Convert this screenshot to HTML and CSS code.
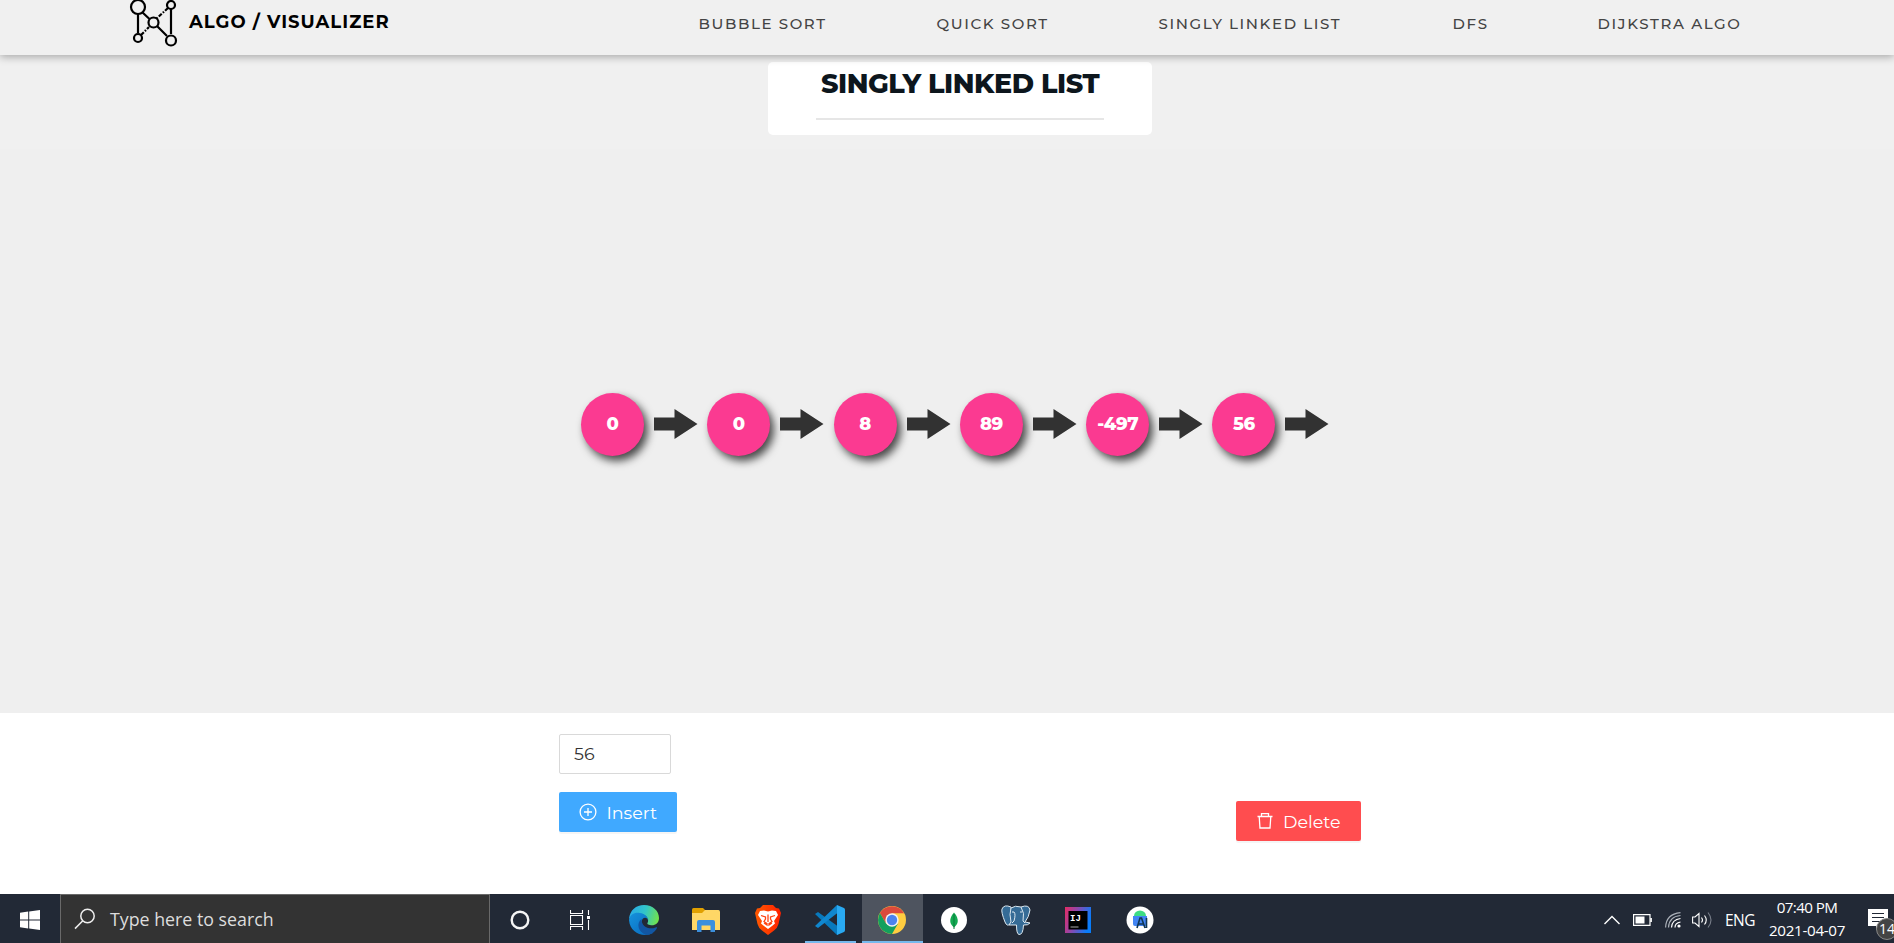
FILE: index.html
```html
<!DOCTYPE html>
<html lang="en">
<head>
<meta charset="utf-8">
<title>Algo / Visualizer</title>
<link rel="stylesheet" href="styles.css">
</head>
<body>
<header class="navbar">
  <a class="brand">
    <svg class="brand-icon" width="50" height="48" viewBox="0 0 50 48" fill="none" stroke="#000" stroke-width="2.200">
      <path d="M10 14V33M14 12l7.500 7M43 8V34M29 26l10 10"/>
      <path d="M13 35l8-8M40 8L28 19" stroke-dasharray="4 1.500 1.500 1.500"/>
      <circle cx="10" cy="7" r="7"/><circle cx="43" cy="5" r="4"/><circle cx="25.500" cy="22.500" r="5"/>
      <circle cx="10" cy="38" r="4"/><circle cx="43" cy="40.500" r="5"/>
    </svg>
    <span class="brand-name">ALGO / VISUALIZER</span>
  </a>
  <nav class="links">
    <a class="l1">BUBBLE SORT</a><a class="l2">QUICK SORT</a><a class="l3">SINGLY LINKED LIST</a><a class="l4">DFS</a><a class="l5">DIJKSTRA ALGO</a>
  </nav>
</header>
<main>
  <section class="heading">
    <div class="title-card"><h1>SINGLY LINKED LIST</h1><hr></div>
  </section>
  <section class="stage">
    <div class="list">
      <div class="node">0</div><svg class="arrow" viewBox="0 0 44 30"><path d="M0 8.500H20.500V0L43.500 15 20.500 30V21.500H0Z"/></svg>
      <div class="node">0</div><svg class="arrow" viewBox="0 0 44 30"><path d="M0 8.500H20.500V0L43.500 15 20.500 30V21.500H0Z"/></svg>
      <div class="node">8</div><svg class="arrow" viewBox="0 0 44 30"><path d="M0 8.500H20.500V0L43.500 15 20.500 30V21.500H0Z"/></svg>
      <div class="node">89</div><svg class="arrow" viewBox="0 0 44 30"><path d="M0 8.500H20.500V0L43.500 15 20.500 30V21.500H0Z"/></svg>
      <div class="node">-497</div><svg class="arrow" viewBox="0 0 44 30"><path d="M0 8.500H20.500V0L43.500 15 20.500 30V21.500H0Z"/></svg>
      <div class="node">56</div><svg class="arrow" viewBox="0 0 44 30"><path d="M0 8.500H20.500V0L43.500 15 20.500 30V21.500H0Z"/></svg>
    </div>
  </section>
  <section class="controls">
    <div class="insert-group">
      <div class="field">56</div>
      <button class="btn insert">
        <svg width="18" height="18" viewBox="0 0 18 18" fill="none" stroke="#fff" stroke-width="1.300"><circle cx="9" cy="9" r="7.900"/><path d="M9 5v8M5 9h8"/></svg>
        <span>Insert</span>
      </button>
    </div>
    <button class="btn delete">
      <svg width="16" height="18" viewBox="0 0 16 18" fill="none" stroke="#fff" stroke-width="1.300"><path d="M.5 4.500H15.500M2.200 4.500L3 16H13L13.800 4.500M4.500 4.500V1.700H11.500V4.500"/></svg>
      <span>Delete</span>
    </button>
  </section>
</main>
<footer class="taskbar">
  <div class="start"><svg width="20" height="20" viewBox="0 0 20 20" fill="#fff"><path d="M0 2.800L8.200 1.600V9.400H0ZM9.200 1.500L20 0V9.400H9.200ZM0 10.400H8.200V18.500L0 17.300ZM9.200 10.400H20V20L9.200 18.600Z"/></svg></div>
  <div class="search">
    <svg width="22" height="22" viewBox="0 0 22 22" fill="none" stroke="#eee" stroke-width="1.500"><circle cx="13.500" cy="8" r="6.700"/><path d="M8.800 12.800L1 20.600"/></svg>
    <span>Type here to search</span>
  </div>
  <div class="apps">
    <div class="app cortana"><svg width="20" height="20" viewBox="0 0 20 20"><circle cx="10" cy="10" r="8.300" fill="none" stroke="#f5f5f5" stroke-width="2.400"/></svg></div>
    <div class="app view"><svg width="20" height="20" viewBox="0 0 20 20" fill="none" stroke="#fff" stroke-width="1.100"><path d="M.5 0V3.500H12.500V0M.5 5.500H12.500V14.500H.5ZM.5 20V16.500H12.500V20M18.500 0V5M18.500 10V20"/><path d="M17 6h3v3h-3z" fill="#fff" stroke="none"/></svg></div>
    <div class="app"><svg width="30" height="30" viewBox="0 0 30 30">
      <defs><linearGradient id="e1" x1="0" y1=".4" x2="1" y2=".6"><stop stop-color="#28a9e8"/><stop offset=".5" stop-color="#32c5c9"/><stop offset="1" stop-color="#72e34b"/></linearGradient>
      <linearGradient id="e2" x1="0" y1="0" x2="1" y2="1"><stop stop-color="#1692dc"/><stop offset="1" stop-color="#0868bd"/></linearGradient></defs>
      <path d="M0 14C1 5 7 0 15 0C24 0 30 6 30 13C30 19 25 21 21 20C18 19.500 18 18.500 19 17C20 12 14 7 7 10C3 11 1 13 0 14Z" fill="url(#e1)"/>
      <path d="M0 15C1 9 6 7 11 8C16 8.500 19 12 19.500 16C18 11 13 12 12.500 17C12 24 19 27 24 28C14 33 1 28 0 15Z" fill="url(#e2)"/>
      <path d="M12.500 14C7 18 9 27 17 30C22 30 26 27 28 23C28.500 22 27.500 22 26.500 22.500C20 25 12.500 22 12.500 14Z" fill="#1256a3"/></svg></div>
    <div class="app"><svg width="28" height="24" viewBox="0 0 28 24"><path d="M0 1.500Q0 0 1.500 0H11L13.500 2.500V6H0Z" fill="#e1a000"/><path d="M0 5H10L13 2H26.500Q28 2 28 4V22H0Z" fill="#ffd766"/><path d="M5 24V14Q5 12 7 12H21Q23 12 23 14V24H18.500V17.500H9.500V24Z" fill="#3b8fdd"/></svg></div>
    <div class="app"><svg width="26" height="30" viewBox="0 0 26 30"><defs><linearGradient id="b"><stop stop-color="#ff5a00"/><stop offset="1" stop-color="#ff2000"/></linearGradient></defs><path d="M8 0H18L21 3L24 3.500L26 8L23.500 19Q22.500 23 19 25.500L13 30L7 25.500Q3.500 23 2.500 19L0 8L2 3.500L5 3Z" fill="url(#b)"/><path d="M5 6L9 5.500 13 6.500 17 5.500 21 6 23 10 19 16 20 18.500 17 21 13 24 9 21 6 18.500 7 16 3 10Z" fill="#fff"/><path d="M6 10.500L10.500 12V14L9 16.500 12 18.500V20L9 18M20 10.500L15.500 12V14L17 16.500 14 18.500V20L17 18M13 9.500V17" stroke="#ff4312" stroke-width="1.300" fill="none"/></svg></div>
    <div class="app code"><svg width="30" height="30" viewBox="0 0 30 30"><path d="M0 9L3 7L28 25L22 30Z" fill="#0879bd"/><path d="M0 21L3 23L25 6L22 0Z" fill="#1087cf"/><path d="M22 0L29 3Q30 3.500 30 5V25Q30 26.500 29 27L22 30Z" fill="#29a9f2"/></svg></div>
    <div class="app active"><svg width="28" height="28" viewBox="0 0 28 28"><circle cx="14" cy="14" r="14" fill="#ffcd40"/><path d="M1.900 7A14 14 0 0 1 26.100 7.200H14L8 17.500Z" fill="#db4a3c"/><path d="M1.900 7A14 14 0 0 0 14 28L20 17.500L14 20L8 17.500Z" fill="#13a05e"/><circle cx="14" cy="14" r="6.700" fill="#f2f2f2"/><circle cx="14" cy="14" r="5.200" fill="#4b83ee"/></svg></div>
    <div class="app"><svg width="26" height="26" viewBox="0 0 26 26"><circle cx="13" cy="13" r="13" fill="#fff"/><path d="M13 5.500C7.500 12 8.500 17 13 20.500C17.500 17 18.500 12 13 5.500Z" fill="#13aa52"/><path d="M13 7V22" stroke="#087a3b" stroke-width="1"/></svg></div>
    <div class="app"><svg width="30" height="30" viewBox="0 0 30 30" fill="#356b96" stroke="#dce8f0" stroke-width="1"><path d="M10 2Q3-1 1 4Q0 7 4 17Q6 22 9 19L11 16Z"/><path d="M20 2Q28-1 29 5Q28 12 24 17L29 18Q27 20.500 22.500 20Q22 30 18 29.500Q15.500 29 15.500 20L12 20L8 20L10 17Q8 9 10 3Q14 0 20 2Z"/><path d="M20 2Q24 8 22 16L24 18M13 7Q15 9 13 16L11 18M13 7H11M19 7H21" fill="none"/></svg></div>
    <div class="app"><svg width="26" height="26" viewBox="0 0 26 26"><defs><linearGradient id="j" x1="0" y1=".1" x2="1" y2=".4"><stop stop-color="#e22d68"/><stop offset=".45" stop-color="#8a49b0"/><stop offset="1" stop-color="#087cfa"/></linearGradient></defs><path d="M0 0H26V26H0Z" fill="url(#j)"/><path d="M3.500 4H22.500V22.500H3.500Z"/><path d="M5.500 20h8" stroke="#aaa"/><text x="5" y="13.500" class="ij">IJ</text></svg></div>
    <div class="app"><svg width="28" height="28" viewBox="0 0 28 28"><circle cx="14" cy="14" r="13.500" fill="#fff"/><path d="M8 10a6 5.500 0 0 1 12 0Z" fill="#3ddc84"/><path d="M7 10H21V20H9Q7 20 7 18Z" fill="#4285f4"/><path d="M11 22L14 12H15.500L19 22M12.500 18H17M20.500 12V22" stroke="#103655" stroke-width="1.600" fill="none"/></svg></div>
  </div>
  <div class="tray">
    <svg class="chevron" width="16" height="10" viewBox="0 0 16 10"><path d="M.5 9L8 1.500L15.500 9" fill="none" stroke="#fff" stroke-width="1.400"/></svg>
    <svg class="battery" width="19" height="12" viewBox="0 0 19 12"><path d="M.6.600H17V11.400H.6ZM18.300 4V8" fill="none" stroke="#fff" stroke-width="1.200"/><path d="M2.500 2.500H11.500V9.500H2.500Z" fill="#fff"/></svg>
    <svg class="wifi" width="16" height="16" viewBox="0 0 16 16" fill="none" stroke="#fff" stroke-width="1.200"><path d="M10 15.500Q10 11 15.500 10"/><path d="M6.500 15.500Q7 7.500 15.500 6.500"/><path d="M3.500 15.500Q4 4.500 15.500 3.500M.6 15.500Q1 2 15.500.6" stroke="#aab0b8"/><circle cx="14" cy="14" r="1.600" fill="#fff" stroke="none"/></svg>
    <svg class="sound" width="20" height="18" viewBox="0 0 20 18" fill="none" stroke="#fff" stroke-width="1.100"><path d="M.6 6H3L7 2.500V15.500L3 12H.6ZM9.500 6.500Q11.500 9 9.500 11.500M12.500 4.500Q16 9 12.500 13.500"/><path d="M16 1.500Q22 9 16 16.500" stroke="#777d88"/></svg>
    <span class="lang">ENG</span>
    <div class="clock"><span class="time">07:40 PM</span><span class="date">2021-04-07</span></div>
    <div class="notice"><svg width="20" height="21" viewBox="0 0 20 21"><path d="M0 0H20V17H12L8 21V17H0Z" fill="#fff"/><path d="M4 4.500H16M4 8.500H16M4 12.500H12" stroke="#202735" stroke-width="1.100"/></svg><span class="badge">14</span></div>
  </div>
</footer>
</body>
</html>
```
FILE: styles.css
```css
* { box-sizing: border-box; }
body { margin: 0; width: 1894px; height: 943px; overflow: hidden; display: flex; flex-direction: column; background: #fff; font-family: Montserrat, Inter, sans-serif; }
svg { display: block; flex: none; }
.navbar { height: 55px; flex: none; display: flex; background: #f0f0f0; box-shadow: 0 2px 8px rgba(0,0,0,.3); position: relative; padding-left: 128px; }
.brand { display: flex; flex: none; width: 570px; }
.brand-name { margin-left: 11px; line-height: 44px; font-size: 18px; font-weight: 700; color: #000; letter-spacing: 1.030px; white-space: nowrap; }
.links { display: flex; color: #444; font-size: 15px; font-weight: 500; line-height: 48px; white-space: nowrap; letter-spacing: 1.600px; padding-left: .6px; }
.links a { flex: none; }
.l1 { width: 238px; }
.l2 { width: 222px; }
.l3 { width: 294px; }
.l4 { width: 145px; }
main { flex: 1; display: flex; flex-direction: column; }
.heading { height: 94px; background: #f0f0f0; display: flex; padding: 7px 0 0 768px; }
.title-card { width: 384px; height: 73px; flex: none; background: #fff; border-radius: 5px; padding: 7px 48px 0; }
h1 { margin: 0; font-size: 27px; line-height: 30px; font-weight: 800; letter-spacing: -.45px; color: #0d161d; white-space: nowrap; text-align: center; }
hr { border: 0; height: 2px; margin: 19px 0 0; background: #e6e6e6; }
.stage { height: 564px; background: #efefef; padding: 244px 0 0 581px; }
.list { display: flex; align-items: center; height: 62px; }
.node { width: 63px; height: 63px; flex: none; border-radius: 50%; background: #fb3a91; box-shadow: 4px 5px 9px rgba(0,0,0,.7); color: #fff; font-size: 18px; font-weight: 800; letter-spacing: -.4px; display: flex; align-items: center; justify-content: center; }
.arrow { width: 44px; height: 30px; margin: 0 9.300px 0 10px; fill: #323232; }
.controls { display: flex; justify-content: space-between; padding: 21px 533px 0 559px; }
.field { width: 112px; height: 40px; border: 1px solid #d9d9d9; border-radius: 2px; padding-left: 14px; font-size: 17.500px; line-height: 37px; color: #333; }
.btn { height: 40px; border: 0; border-radius: 2px; color: #fff; font-family: Montserrat, Inter, sans-serif; font-size: 17.500px; display: flex; align-items: center; }
.btn span { padding-top: 1px; }
.insert { width: 118px; margin-top: 18px; padding: 0 0 0 19.500px; background: #40a9ff; gap: 10px; box-shadow: 0 2px 0 rgba(0,0,0,.04); }
.delete { width: 125px; margin-top: 67px; padding: 0 0 0 21px; gap: 10px; background: #ff4d4f; box-shadow: 0 2px 0 rgba(0,0,0,.04); }
.taskbar { height: 49px; flex: none; display: flex; background: #222936; color: #fff; font-family: "Segoe UI", "Open Sans", "Noto Sans", sans-serif; }
.start { width: 60px; flex: none; display: flex; align-items: center; justify-content: center; padding-top: 2px; }
.search { width: 430px; flex: none; background: #333; border: 1px solid #696969; border-bottom: 0; display: flex; align-items: center; padding-left: 13px; gap: 14px; font-size: 17.800px; color: #ddd; white-space: nowrap; }
.apps { display: flex; flex: none; }
.app { width: 62px; height: 49px; flex: none; display: flex; align-items: center; justify-content: center; padding-top: 2px; }
.cortana { width: 60px; }
.view { width: 63px; padding-right: 3px; }
.code { width: 61px; background: linear-gradient(#76b9ed,#76b9ed) 5px 100% / 51px 2px no-repeat; padding-right: 1px; }
.code { margin-left: 1px; }
.active { width: 61px; margin-left: 1px; background: #4e545f; border-bottom: 2px solid #76b9ed; padding: 4px 2px 0 0; }
.ij { font: bold 9px "Liberation Mono", monospace; fill: #fff; }
.tray { flex: 1; min-width: 0; display: flex; align-items: center; padding: 2px 0 0 433px; white-space: nowrap; }
.battery { margin-left: 13px; }
.wifi { margin-left: 13px; }
.sound { margin-left: 11px; }
.lang { flex: none; margin-left: 13px; font-size: 15.500px; letter-spacing: -.5px; width: 44px; }
.clock { flex: none; width: 76px; margin-top: -2px; display: flex; flex-direction: column; align-items: center; font-size: 15.200px; line-height: 23px; letter-spacing: -.3px; }
.time { letter-spacing: -.6px; }
.notice { position: relative; margin-left: 23px; }
.badge { position: absolute; left: 8px; top: 9px; width: 22px; height: 22px; border-radius: 50%; border: 1px solid #888; background: #444; font-size: 14px; line-height: 20px; padding-left: 2px; }
```
